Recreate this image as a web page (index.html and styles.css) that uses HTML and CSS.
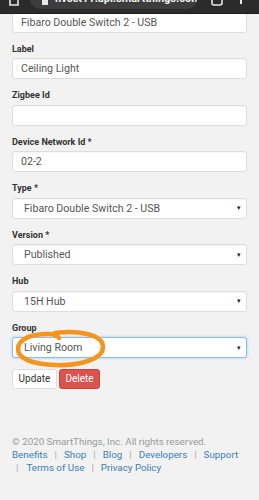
FILE: index.html
```html
<!DOCTYPE html>
<html>
<head>
<meta charset="utf-8">
<link rel="stylesheet" href="styles.css">
</head>
<body>
<div class="chrome">
  <svg class="home" width="10" height="6" viewBox="0 0 10 6"><path d="M1 -2 V5 H9 V-2" fill="none" stroke="#e8e8e8" stroke-width="1.6"/></svg>
  <div class="url">
    <svg class="lock" width="6" height="6" viewBox="0 0 6 6"><rect x="0" y="-2" width="6" height="7" rx="0.5" fill="#e8e8e8"/></svg>
    <span class="url-text">hvcet11.api.smartthings.com</span>
  </div>
  <svg class="tabs" width="12" height="6" viewBox="0 0 12 6"><path d="M1 -3 V3 Q1 5 3 5 H9 Q11 5 11 3 V-3" fill="none" stroke="#e8e8e8" stroke-width="1.6"/></svg>
  <svg class="dots" width="4" height="6" viewBox="0 0 4 6"><rect x="1" y="0" width="2" height="4" fill="#e8e8e8"/></svg>
</div>

<main class="page">
  <form class="form">
    <div class="group first">
      <input class="field" type="text" value="Fibaro Double Switch 2 - USB">
    </div>
    <div class="group">
      <label class="lbl">Label</label>
      <input class="field" type="text" value="Ceiling Light">
    </div>
    <div class="group">
      <label class="lbl">Zigbee Id</label>
      <input class="field" type="text" value="">
    </div>
    <div class="group">
      <label class="lbl">Device Network Id *</label>
      <input class="field" type="text" value="02-2">
    </div>
    <div class="group">
      <label class="lbl">Type *</label>
      <div class="field select"><span>Fibaro Double Switch 2 - USB</span><span class="caret">▾</span></div>
    </div>
    <div class="group">
      <label class="lbl">Version *</label>
      <div class="field select"><span>Published</span><span class="caret">▾</span></div>
    </div>
    <div class="group">
      <label class="lbl">Hub</label>
      <div class="field select"><span>15H Hub</span><span class="caret">▾</span></div>
    </div>
    <div class="group last">
      <label class="lbl">Group</label>
      <div class="field select focus"><span>Living Room</span><span class="caret">▾</span></div>
      <svg class="circle" width="96" height="42" viewBox="0 0 96 42"><path d="M40 4 C62 1 88 5 88 18 C88 31 62 37 40 36 C18 35 3 30 3 20 C3 10 18 4 35 5 C39 5.2 42 6 44 9" fill="none" stroke="#f7941d" stroke-width="4.5" stroke-linecap="round"/></svg>
    </div>
    <div class="actions">
      <button type="button" class="btn btn-default">Update</button>
      <button type="button" class="btn btn-danger">Delete</button>
    </div>
  </form>

  <footer class="footer">
    <p class="copy">© 2020 SmartThings, Inc. All rights reserved.</p>
    <p class="links"><a>Benefits</a><span class="sep">|</span><a>Shop</a><span class="sep">|</span><a>Blog</a><span class="sep">|</span><a>Developers</a><span class="sep">|</span><a>Support</a> <span class="sep first-sep">|</span><a>Terms of Use</a><span class="sep">|</span><a>Privacy Policy</a></p>
  </footer>
</main>
</body>
</html>
```
FILE: styles.css
```css
* { box-sizing: border-box; }
html, body { margin: 0; padding: 0; }
body {
  background: #f2f2f2;
  font-family: Roboto, "Liberation Sans", sans-serif;
  color: #333;
  width: 259px;
  height: 500px;
  overflow: hidden;
}
.chrome {
  position: fixed;
  top: 0; left: 0;
  width: 259px;
  height: 14px;
  background: #2b2b2b;
  border-bottom: 1px solid #1e1e1e;
  z-index: 10;
  overflow: hidden;
}
.home { position: absolute; left: 9px; top: 0; }
.url {
  position: absolute;
  left: 30px; top: -12px;
  width: 167px; height: 21px;
  border-radius: 10px;
  background: #3d3d3d;
  overflow: hidden;
}
.lock { position: absolute; left: 12px; top: 12px; }
.url-text {
  position: absolute;
  left: 25px; top: 5px;
  font-size: 11px;
  line-height: 12px;
  font-weight: 700;
  color: #f0f0f0;
  white-space: nowrap;
}
.tabs { position: absolute; left: 211px; top: 0; }
.dots { position: absolute; left: 239px; top: 0; }

.page { padding: 11.5px 12px 0 12px; }
.form { display: flex; flex-direction: column; }
.group { position: relative; display: flex; flex-direction: column; margin-bottom: 10px; }
.lbl {
  font-size: 9px;
  line-height: 12px;
  font-weight: 700;
  color: #333;
  margin-bottom: 3.5px;
}
.field {
  width: 235px;
  height: 21px;
  border: 1px solid #ddd;
  border-radius: 3px;
  background: #fff;
  font-family: Roboto, "Liberation Sans", sans-serif;
  font-size: 10.6px;
  color: #555;
  padding: 0 8px;
  margin: 0;
  box-shadow: inset 0 1px 1px rgba(0,0,0,0.04);
  outline: none;
}
.select {
  display: flex;
  align-items: center;
  justify-content: space-between;
  padding: 0 5px 0 11px;
}
.caret { font-size: 7px; color: #222; }
.focus {
  border-color: #8fbde6;
  box-shadow: 0 0 3px rgba(102,175,233,0.6);
}
.circle { position: absolute; left: 3px; top: 7px; }
.actions { display: flex; gap: 2px; margin-top: 0.5px; }
.btn {
  height: 20px;
  border-radius: 3px;
  font-family: Roboto, "Liberation Sans", sans-serif;
  font-size: 10px;
  padding: 0;
  margin: 0;
}
.btn-default { width: 45px; background: #fff; border: 1px solid #ddd; color: #333; }
.btn-danger { width: 41px; background: #d9534f; border: 1px solid #d43f3a; color: #fff; }

.footer { margin-top: 46px; }
.copy { margin: 0; font-size: 9.8px; line-height: 13px; color: #9a9a9a; }
.links { margin: 0; font-size: 9.8px; line-height: 13.5px; color: #3a7fb8; }
.links a { color: #3a7fb8; }
.sep { color: #aaa; padding: 0 7px; }
.first-sep { padding-left: 4px; padding-right: 8px; }
```
